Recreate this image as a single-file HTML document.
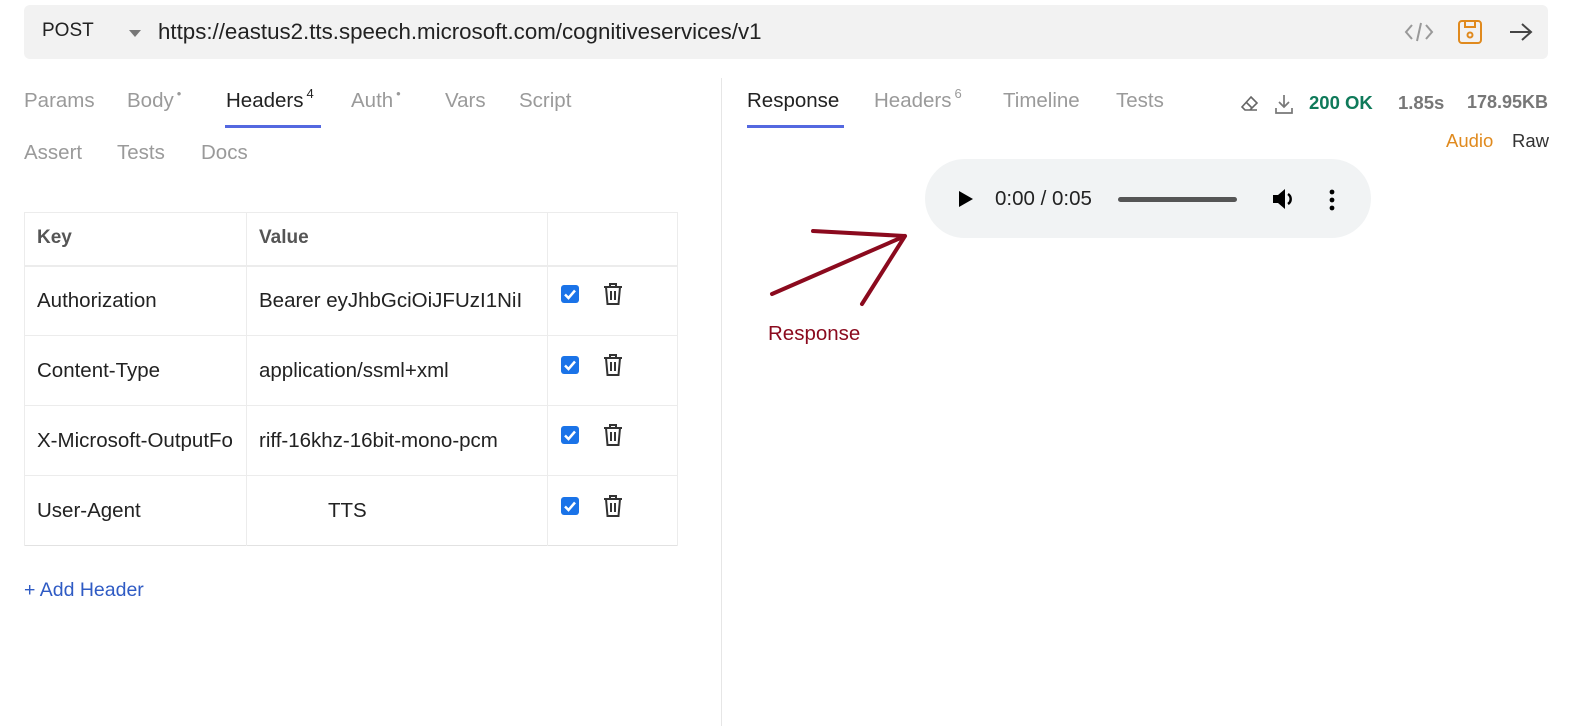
<!DOCTYPE html>
<html><head><meta charset="utf-8"><style>
*{margin:0;padding:0;box-sizing:border-box}
body{width:1583px;height:726px;background:#fff;font-family:"Liberation Sans",sans-serif;position:relative;overflow:hidden}
.a{position:absolute;white-space:nowrap}
.t{font-size:20.5px;color:#9a9a9a;top:89px}
.sup{font-size:13px;position:relative;top:-9px;margin-left:3px}
.cell{position:absolute;font-size:20.5px;color:#222;white-space:nowrap}
.hl{position:absolute;background:#ececec}
</style></head><body>
<div class="a" style="left:24px;top:5px;width:1524px;height:54px;background:#f2f2f2;border-radius:6px"></div>
<div class="a" style="left:42px;top:20px;font-size:19px;color:#222">POST</div>
<div class="a" style="left:129px;top:30px;width:0;height:0;border-left:6px solid transparent;border-right:6px solid transparent;border-top:7px solid #777"></div>
<div class="a" style="left:158px;top:19px;font-size:22.3px;color:#222">https://eastus2.tts.speech.microsoft.com/cognitiveservices/v1</div>
<svg class="a" style="left:1404px;top:20px" width="30" height="24" viewBox="0 0 30 24"><path d="M8 5 L2 12 L8 19 M22 5 L28 12 L22 19 M17 3 L13 21" stroke="#999" stroke-width="2" fill="none"/></svg>
<svg class="a" style="left:1457px;top:19px" width="26" height="26" viewBox="0 0 26 26"><rect x="2" y="2" width="22" height="22" rx="3" stroke="#e08a1e" stroke-width="2" fill="none"/><path d="M8 2v6h10V2" stroke="#e08a1e" stroke-width="2" fill="none"/><circle cx="13" cy="16" r="2.5" stroke="#e08a1e" stroke-width="2" fill="none"/></svg>
<svg class="a" style="left:1508px;top:21px" width="26" height="22" viewBox="0 0 26 22"><path d="M2 11H23M14 3l9 8-9 8" stroke="#444" stroke-width="2" fill="none"/></svg>

<div class="a t" style="left:24px">Params</div>
<div class="a t" style="left:127px">Body<span class="sup">•</span></div>
<div class="a t" style="left:226px;color:#222">Headers<span class="sup">4</span></div>
<div class="a" style="left:225px;top:125px;width:96px;height:3px;background:#5468e0"></div>
<div class="a t" style="left:351px">Auth<span class="sup">•</span></div>
<div class="a t" style="left:445px">Vars</div>
<div class="a t" style="left:519px">Script</div>
<div class="a t" style="left:24px;top:141px">Assert</div>
<div class="a t" style="left:117px;top:141px">Tests</div>
<div class="a t" style="left:201px;top:141px">Docs</div>

<div class="a" style="left:721px;top:78px;width:1px;height:648px;background:#e6e6e6"></div>

<div class="hl" style="left:24px;top:212px;width:654px;height:1px"></div>
<div class="hl" style="left:24px;top:265px;width:654px;height:2px"></div>
<div class="hl" style="left:24px;top:335px;width:654px;height:1px"></div>
<div class="hl" style="left:24px;top:405px;width:654px;height:1px"></div>
<div class="hl" style="left:24px;top:475px;width:654px;height:1px"></div>
<div class="hl" style="left:24px;top:545px;width:654px;height:1px;background:#e2e2e2"></div>
<div class="hl" style="left:24px;top:212px;width:1px;height:334px"></div>
<div class="hl" style="left:246px;top:212px;width:1px;height:334px"></div>
<div class="hl" style="left:547px;top:212px;width:1px;height:334px"></div>
<div class="hl" style="left:677px;top:212px;width:1px;height:334px"></div>
<div class="cell" style="left:37px;top:227px;font-weight:bold;color:#555;font-size:19px">Key</div>
<div class="cell" style="left:259px;top:227px;font-weight:bold;color:#555;font-size:19px">Value</div>
<div class="cell" style="left:37px;top:289px">Authorization</div>
<div class="cell" style="left:259px;top:289px;width:285px;overflow:hidden">Bearer eyJhbGciOiJFUzI1NiI</div>
<div class="cell" style="left:37px;top:359px">Content-Type</div>
<div class="cell" style="left:259px;top:359px">application/ssml+xml</div>
<div class="cell" style="left:37px;top:429px;width:197px;overflow:hidden">X-Microsoft-OutputFormat</div>
<div class="cell" style="left:259px;top:429px">riff-16khz-16bit-mono-pcm</div>
<div class="cell" style="left:37px;top:499px">User-Agent</div>
<div class="cell" style="left:328px;top:499px">TTS</div>
<svg width="0" height="0" style="position:absolute"><defs><g id="tr"><path d="M2 5h18M8 5V2h6v3M4 5l1.5 17h11L18 5M9 9v9M13 9v9" stroke="#333" stroke-width="2" fill="none"/></g><g id="ck"><rect width="18" height="18" rx="3" fill="#1a73e8"/><path d="M4 9.5l3.5 3.5L14 5.5" stroke="#fff" stroke-width="2.5" fill="none"/></g></defs></svg>
<svg class="a" style="left:561px;top:285px" width="18" height="18"><use href="#ck"/></svg>
<svg class="a" style="left:602px;top:282px" width="22" height="24"><use href="#tr"/></svg>
<svg class="a" style="left:561px;top:356px" width="18" height="18"><use href="#ck"/></svg>
<svg class="a" style="left:602px;top:353px" width="22" height="24"><use href="#tr"/></svg>
<svg class="a" style="left:561px;top:426px" width="18" height="18"><use href="#ck"/></svg>
<svg class="a" style="left:602px;top:423px" width="22" height="24"><use href="#tr"/></svg>
<svg class="a" style="left:561px;top:497px" width="18" height="18"><use href="#ck"/></svg>
<svg class="a" style="left:602px;top:494px" width="22" height="24"><use href="#tr"/></svg>
<div class="a" style="left:24px;top:579px;font-size:19.5px;color:#2f5bc4">+ Add Header</div>

<div class="a t" style="left:747px;color:#222">Response</div>
<div class="a" style="left:747px;top:125px;width:97px;height:3px;background:#5468e0"></div>
<div class="a t" style="left:874px">Headers<span class="sup">6</span></div>
<div class="a t" style="left:1003px">Timeline</div>
<div class="a t" style="left:1116px">Tests</div>
<svg class="a" style="left:1240px;top:94px" width="20" height="20" viewBox="0 0 20 20"><path d="M11 3l6 6-7 7H5l-3-3z M6 8l6 6 M5 16h12" stroke="#666" stroke-width="1.6" fill="none"/></svg>
<svg class="a" style="left:1274px;top:93px" width="20" height="22" viewBox="0 0 20 22"><path d="M10 2v12M5 9l5 5 5-5M2 15v5h16v-5" stroke="#777" stroke-width="1.7" fill="none"/></svg>
<div class="a" style="left:1309px;top:92px;font-size:18.5px;font-weight:bold;color:#0f7a5a">200 OK</div>
<div class="a" style="left:1398px;top:92px;font-size:18.5px;font-weight:bold;color:#777">1.85s</div>
<div class="a" style="left:1467px;top:92px;font-size:18px;font-weight:bold;color:#777">178.95KB</div>
<div class="a" style="left:1446px;top:130px;font-size:18.5px;color:#e08a1e">Audio</div>
<div class="a" style="left:1512px;top:130px;font-size:18.5px;color:#333">Raw</div>

<div class="a" style="left:925px;top:159px;width:446px;height:79px;border-radius:40px;background:#f1f3f4"></div>
<svg class="a" style="left:958px;top:190px" width="16" height="18"><path d="M1 1L15 9 1 17z" fill="#000"/></svg>
<div class="a" style="left:995px;top:187px;font-size:20.5px;color:#222">0:00 / 0:05</div>
<div class="a" style="left:1118px;top:197px;width:119px;height:5px;border-radius:3px;background:#555"></div>
<svg class="a" style="left:1272px;top:187px" width="26" height="24" viewBox="0 0 26 24"><path d="M1 8h5l7-6v20l-7-6H1z" fill="#000"/><path d="M16 7a6 6 0 0 1 0 10" stroke="#000" stroke-width="2.5" fill="none"/></svg>
<svg class="a" style="left:1328px;top:188px" width="8" height="24"><circle cx="4" cy="4" r="2.4"/><circle cx="4" cy="12" r="2.4"/><circle cx="4" cy="20" r="2.4"/></svg>

<svg class="a" style="left:0;top:0" width="1583" height="726"><g stroke="#8b0a1e" stroke-width="4" stroke-linecap="round" fill="none"><path d="M813 231L905 236M772 294L905 236M862 304L905 236"/></g></svg>
<div class="a" style="left:768px;top:322px;font-size:20.5px;color:#8b0a1e">Response</div>
</body></html>
